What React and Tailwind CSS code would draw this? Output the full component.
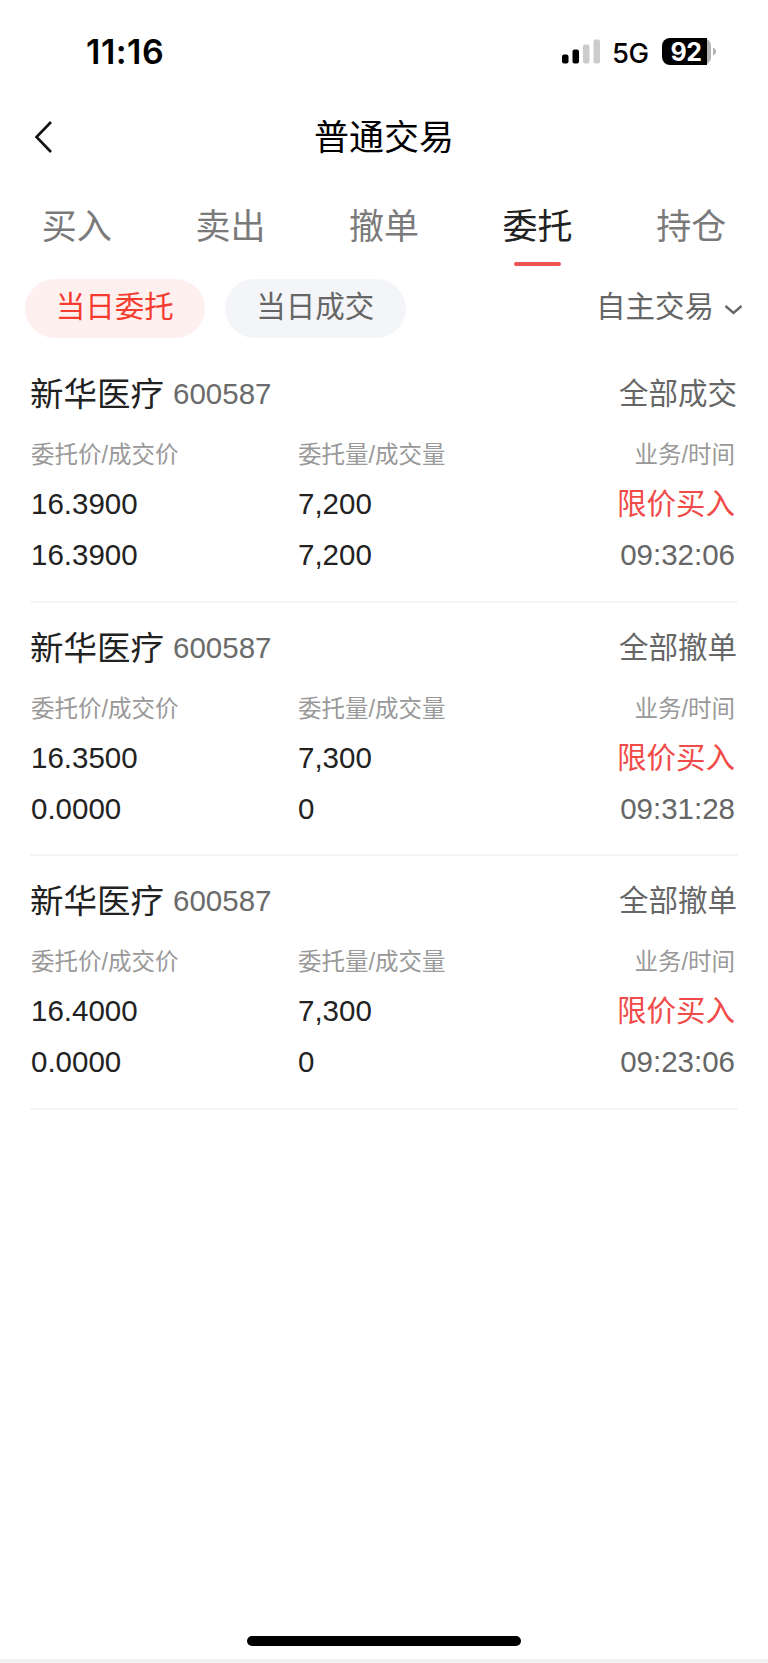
import React from 'react';

const tabs = ['买入', '卖出', '撤单', '委托', '持仓'];

const orders = [
  { id: 1, name: '新华医疗', code: '600587', status: '全部成交', price: '16.3900', dealPrice: '16.3900', qty: '7,200', dealQty: '7,200', type: '限价买入', time: '09:32:06' },
  { id: 2, name: '新华医疗', code: '600587', status: '全部撤单', price: '16.3500', dealPrice: '0.0000', qty: '7,300', dealQty: '0', type: '限价买入', time: '09:31:28' },
  { id: 3, name: '新华医疗', code: '600587', status: '全部撤单', price: '16.4000', dealPrice: '0.0000', qty: '7,300', dealQty: '0', type: '限价买入', time: '09:23:06' },
];

function StatusBar() {
  return (
    <div className="h-[102px] flex justify-between pl-[86px] pr-[52px] pt-[31px] font-['Inter',sans-serif] text-black">
      <span className="h-10 leading-[41px] text-[34px] font-semibold tracking-[0.5px]">11:16</span>
      <div className="flex h-10 items-center">
        <svg width="39" height="25" viewBox="0 0 39 25">
          <rect x="0" y="15.5" width="6.5" height="9" rx="2" fill="#000" />
          <rect x="10.5" y="10.5" width="6.500" height="14" rx="2" fill="#000" />
          <rect x="21" y="5.5" width="6.500" height="19" rx="2" fill="#ccc" />
          <rect x="31.5" y="0.5" width="6.500" height="24" rx="2" fill="#ccc" />
        </svg>
        <span className="ml-[11px] mt-[3px] w-[38px] text-[27.5px] leading-10 font-medium tracking-[-0.5px]">5G</span>
        <div className="relative ml-3 h-[27px] w-[54px]">
          <svg width="54" height="27" viewBox="0 0 54 27" className="block">
            <path d="M8 0H41a8 8 0 0 1 8 8v11a8 8 0 0 1-8 8H8z" fill="#b3b3b3" />
            <path d="M8 0H45v27H8a8 8 0 0 1-8-8V8a8 8 0 0 1 8-8z" fill="#000" />
            <path d="M51 9.500c4 1.500 4 6.500 0 8z" fill="#b3b3b3" />
          </svg>
          <span className="absolute left-0 top-0 w-[48px] text-center text-[25px] leading-[28px] font-bold tracking-[-0.5px] text-white">92</span>
        </div>
      </div>
    </div>
  );
}

function Order({ order }) {
  return (
    <div className="h-[253.7px] border-b-2 border-[#f5f5f5] pt-[25px] text-[29.5px] leading-10 text-[#222]">
      <div className="flex h-10 items-center justify-between">
        <div className="flex items-center">
          <span className="pt-0.5 text-[33.5px]">{order.name}</span>
          <span className="ml-[9px] text-[#6b6b6b]">{order.code}</span>
        </div>
        <span className="mr-px text-[#666]">{order.status}</span>
      </div>
      <div className="mt-[21px] flex h-10 pl-px text-[23.5px] text-[#999]">
        <span className="w-[267px]">委托价/成交价</span>
        <span>委托量/成交量</span>
        <span className="ml-auto mr-[3px]">业务/时间</span>
      </div>
      <div className="mt-[9px] flex h-10 pl-px">
        <span className="w-[267px]">{order.price}</span>
        <span>{order.qty}</span>
        <span className="ml-auto mr-[3px] text-[#f04b48]">{order.type}</span>
      </div>
      <div className="mt-[11px] flex h-10 pl-px">
        <span className="w-[267px]">{order.dealPrice}</span>
        <span>{order.dealQty}</span>
        <span className="ml-auto mr-[3px] text-[#666]">{order.time}</span>
      </div>
    </div>
  );
}

export default function App() {
  return (
    <div className="flex h-[1663px] w-[768px] flex-col overflow-hidden bg-white font-['Liberation_Sans','Noto_Sans_CJK_SC',sans-serif]">
      <StatusBar />

      <header className="grid h-[68px] grid-cols-3 items-center px-[34px]">
        <svg width="20" height="34" viewBox="0 0 20 34" fill="none" stroke="#111" strokeWidth="2.6">
          <path d="M17 2L2.500 17L17 32" />
        </svg>
        <h1 className="pt-0.5 text-center text-[35px] leading-[68px] text-black">普通交易</h1>
      </header>

      <nav className="flex h-[108px] pt-[34px]">
        {tabs.map((tab) => (
          <div key={tab} className="flex flex-1 flex-col items-center">
            <span className={`text-[35px] leading-[46px] ${tab === '委托' ? 'text-[#222]' : 'text-[#7a7a7a]'}`}>
              {tab}
            </span>
            {tab === '委托' && <span className="mt-[12px] h-1 w-[47px] rounded-full bg-[#f05352]" />}
          </div>
        ))}
      </nav>

      <div className="flex h-[60px] items-start gap-5 pl-[24.5px] pr-[25px] pt-px text-[29.5px]">
        <button className="h-[59px] w-[180.5px] rounded-full bg-[#fff0f0] pb-[3px] text-[#f53c2e]">当日委托</button>
        <button className="h-[59px] w-[180.5px] rounded-full bg-[#f4f5f8] pb-[3px] text-[#666]">当日成交</button>
        <button className="ml-auto flex h-[59px] items-center pb-[3px] text-[#666]">
          自主交易
          <svg width="19" height="12" viewBox="0 0 19 12" className="ml-[10px] mt-[5px]" fill="none" stroke="#666" strokeWidth="2.4">
            <path d="M1.5 2L9.5 9L17.5 2" />
          </svg>
        </button>
      </div>

      <main className="mt-[11px] px-[30px]">
        {orders.map((order) => (
          <Order key={order.id} order={order} />
        ))}
      </main>

      <footer className="mt-auto flex h-[27px] flex-col items-center border-b-4 border-[#f2f2f2]">
        <div className="h-[10px] w-[274px] rounded-full bg-black" />
      </footer>
    </div>
  );
}
